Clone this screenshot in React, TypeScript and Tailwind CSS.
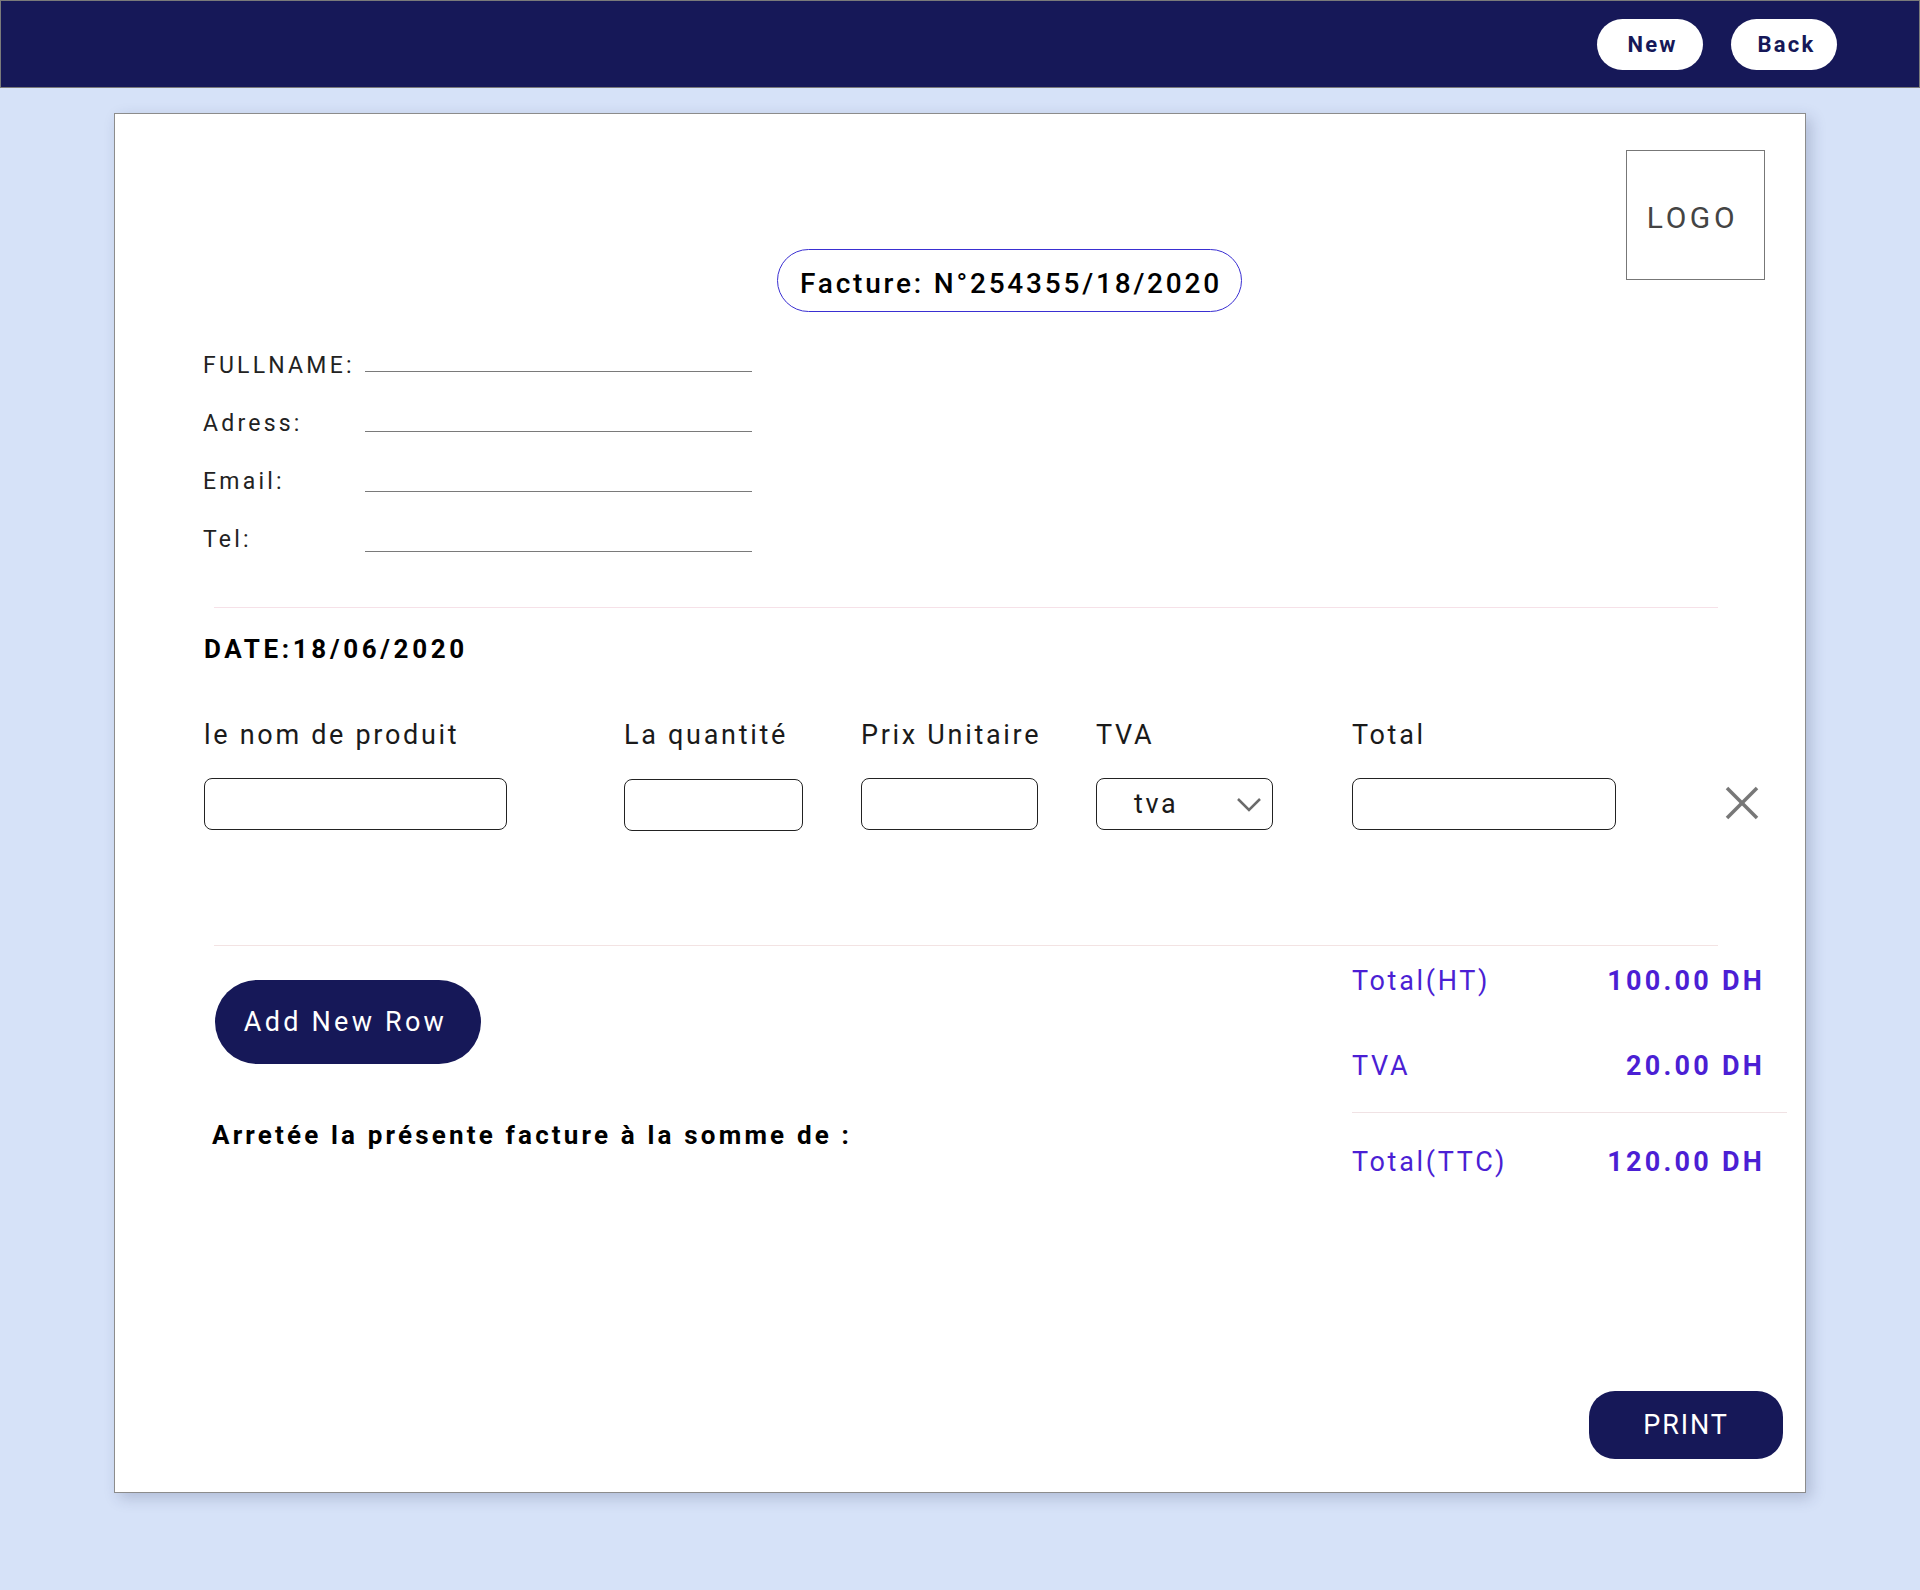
const fields = ['FULLNAME:', 'Adress:', 'Email:', 'Tel:'];

function Pill({ label }: { label: string }) {
  return (
    <button className="flex h-[51px] w-[106px] items-center justify-center rounded-full bg-white pl-[5px] text-[22px] font-bold tracking-[0.1em] text-[#161858]">
      {label}
    </button>
  );
}

function Chevron() {
  return (
    <svg width="26" height="16" viewBox="0 0 26 16" fill="none">
      <polyline points="2,3 13,14 24,3" stroke="#6b6b6b" strokeWidth="2.5" />
    </svg>
  );
}

function Cross() {
  return (
    <svg width="36" height="36" viewBox="0 0 36 36" fill="none">
      <line x1="3" y1="3" x2="33" y2="33" stroke="#777" strokeWidth="3.5" />
      <line x1="33" y1="3" x2="3" y2="33" stroke="#777" strokeWidth="3.5" />
    </svg>
  );
}

function TotalRow({ label, value }: { label: string; value: string }) {
  return (
    <div className="flex items-end justify-between pr-[22px] text-[27px] leading-[32px] text-[#4b1fd4]">
      <span className="tracking-[0.1em]">{label}</span>
      <span className="font-bold tracking-[0.12em]">{value}</span>
    </div>
  );
}

export default function App() {
  return (
    <div className="min-h-[1590px] bg-[#d6e2f8] font-['Roboto',sans-serif] text-[#1a1a1a]">
      <header className="flex h-[88px] items-center justify-end gap-[28px] border border-[#7a7a7a] bg-[#161858] pr-[82px] pt-[1px]">
        <Pill label="New" />
        <Pill label="Back" />
      </header>

      <main className="ml-[114px] mt-[25px] flex h-[1380px] w-[1692px] flex-col border border-[#8c8c8c] bg-white shadow-[5px_5px_14px_rgba(40,50,90,0.22)]">
        {/* top: invoice number + logo */}
        <div className="flex items-start pl-[88px] pr-[40px] pt-[36px]">
          <div className="flex-1 pt-[99px]">
            <div className="ml-[574px] flex h-[63px] w-[465px] items-center justify-center rounded-full border border-[#3a2fd2] pt-[6px] pl-[3px] text-[28px] font-medium tracking-[0.1em] text-black">
              Facture: N°254355/18/2020
            </div>
          </div>
          <div className="flex h-[130px] w-[139px] items-center justify-center border border-[#777] pt-[5px] pr-[6px] text-[30px] tracking-[0.12em] text-[#444]">
            LOGO
          </div>
        </div>

        {/* client fields */}
        <div className="mt-[41px] flex pl-[88px]">
          <div className="flex w-[162px] flex-col gap-[32px]">
            {fields.map((f) => (
              <span key={f} className="text-[23px] leading-[26px] tracking-[0.14em] text-[#222]">
                {f}
              </span>
            ))}
          </div>
          <div className="flex flex-col gap-[59px] pt-[18px]">
            {fields.map((f) => (
              <div key={f} className="h-px w-[387px] bg-[#7a7a7a]" />
            ))}
          </div>
        </div>

        <div className="ml-[99px] mt-[54px] h-px w-[1504px] bg-[#f6e1e8]" />

        <div className="ml-[89px] mt-[26px] text-[26px] font-bold leading-[30px] tracking-[0.14em] text-black">
          DATE:18/06/2020
        </div>

        {/* product row */}
        <div className="mt-[56px] flex items-start pl-[89px]">
          <div className="flex w-[420px] flex-col gap-[28px]">
            <span className="text-[27px] leading-[30px] tracking-[0.1em]">le nom de produit</span>
            <div className="h-[52px] w-[303px] rounded-[8px] border border-[#222]" />
          </div>
          <div className="flex w-[237px] flex-col gap-[28px]">
            <span className="text-[27px] leading-[30px] tracking-[0.1em]">La quantité</span>
            <div className="mt-px h-[52px] w-[179px] rounded-[8px] border border-[#222]" />
          </div>
          <div className="flex w-[235px] flex-col gap-[28px]">
            <span className="text-[27px] leading-[30px] tracking-[0.1em]">Prix Unitaire</span>
            <div className="h-[52px] w-[177px] rounded-[8px] border border-[#222]" />
          </div>
          <div className="flex w-[256px] flex-col gap-[28px]">
            <span className="text-[27px] leading-[30px] tracking-[0.1em]">TVA</span>
            <div className="flex h-[52px] w-[177px] items-center justify-between rounded-[8px] border border-[#222] pl-[37px] pr-[10px]">
              <span className="text-[27px] tracking-[0.1em]">tva</span>
              <Chevron />
            </div>
          </div>
          <div className="flex w-[372px] flex-col gap-[28px]">
            <span className="text-[27px] leading-[30px] tracking-[0.1em]">Total</span>
            <div className="h-[52px] w-[264px] rounded-[8px] border border-[#222]" />
          </div>
          <div className="mt-[65px]">
            <Cross />
          </div>
        </div>

        <div className="ml-[99px] mt-[114px] h-px w-[1504px] bg-[#f3e3e3]" />

        {/* bottom: actions + totals */}
        <div className="flex items-start pl-[88px] pr-[18px]">
          <div className="flex flex-1 flex-col">
            <button className="ml-[12px] mt-[34px] flex h-[84px] w-[266px] items-center justify-center rounded-full bg-[#161858] pt-px pr-[5px] text-[27px] tracking-[0.12em] text-white">
              Add New Row
            </button>
            <p className="ml-[9px] mt-[56px] text-[26px] font-bold leading-[30px] tracking-[0.122em] text-black">
              Arretée la présente facture à la somme de :
            </p>
          </div>
          <div className="flex w-[435px] flex-col">
            <div className="mt-[19px]">
              <TotalRow label="Total(HT)" value="100.00 DH" />
            </div>
            <div className="mt-[53px]">
              <TotalRow label="TVA" value="20.00 DH" />
            </div>
            <div className="mt-[30px] h-px w-full bg-[#f0e2e4]" />
            <div className="mt-[33px]">
              <TotalRow label="Total(TTC)" value="120.00 DH" />
            </div>
          </div>
        </div>

        <div className="mt-auto flex justify-end pb-[33px] pr-[22px]">
          <button className="flex h-[68px] w-[194px] items-center justify-center rounded-[26px] bg-[#161858] pt-px text-[27px] tracking-[0.07em] text-white">
            PRINT
          </button>
        </div>
      </main>
    </div>
  );
}
